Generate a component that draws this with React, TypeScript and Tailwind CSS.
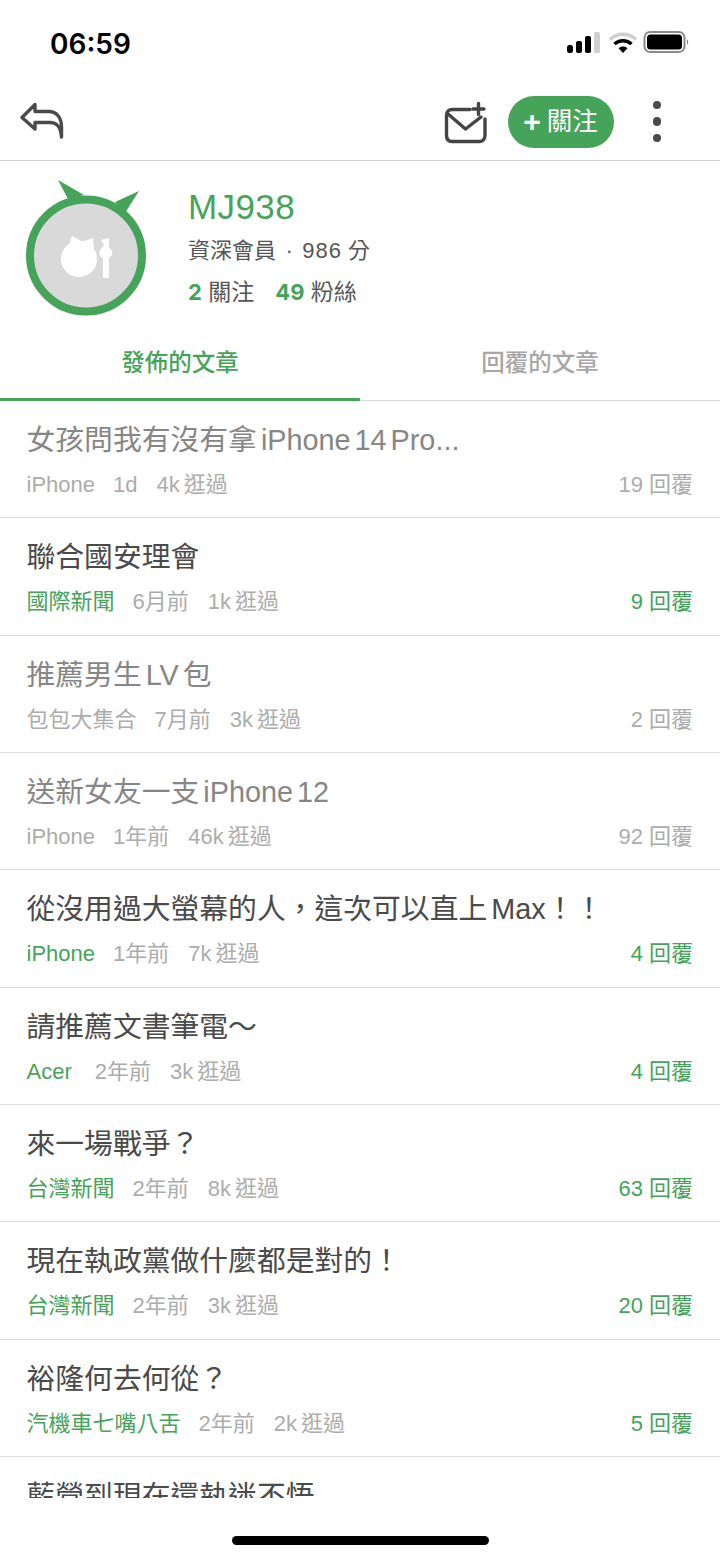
const font = "[font-family:'Liberation_Sans','Noto_Sans_CJK_TC',sans-serif]";

interface Post {
  title: string;
  board: string;
  age: string;
  views: string;
  replies: string;
  read?: boolean;
  gap?: string;
}

const posts: Post[] = [
  { title: "女孩問我有沒有拿 iPhone 14 Pro...", board: "iPhone", age: "1d", views: "4k 逛過", replies: "19 回覆", read: true },
  { title: "聯合國安理會", board: "國際新聞", age: "6月前", views: "1k 逛過", replies: "9 回覆" },
  { title: "推薦男生 LV 包", board: "包包大集合", age: "7月前", views: "3k 逛過", replies: "2 回覆", read: true },
  { title: "送新女友一支 iPhone 12", board: "iPhone", age: "1年前", views: "46k 逛過", replies: "92 回覆", read: true },
  { title: "從沒用過大螢幕的人，這次可以直上 Max！！", board: "iPhone", age: "1年前", views: "7k 逛過", replies: "4 回覆" },
  { title: "請推薦文書筆電～", board: "Acer", age: "2年前", views: "3k 逛過", replies: "4 回覆", gap: "ml-[23px]" },
  { title: "來一場戰爭？", board: "台灣新聞", age: "2年前", views: "8k 逛過", replies: "63 回覆" },
  { title: "現在執政黨做什麼都是對的！", board: "台灣新聞", age: "2年前", views: "3k 逛過", replies: "20 回覆" },
  { title: "裕隆何去何從？", board: "汽機車七嘴八舌", age: "2年前", views: "2k 逛過", replies: "5 回覆" },
  { title: "藍營到現在還執迷不悟", board: "台灣新聞", age: "2年前", views: "2k 逛過", replies: "5 回覆" },
];

function StatusBar() {
  return (
    <div className="flex h-[80px] items-start justify-between pl-[50px] pr-[29px] pt-[26px]">
      <span className="mt-[1px] font-['Inter',sans-serif] text-[28px] font-semibold leading-[34px] text-black">06:59</span>
      <svg width="125" height="24" viewBox="0 0 125 24" className="mt-[5px]">
        <rect x="1" y="14" width="6" height="8" rx="2.5" fill="#000" />
        <rect x="10" y="10" width="6" height="12" rx="2" fill="#000" />
        <rect x="19" y="5" width="6" height="17" rx="2" fill="#000" />
        <rect x="28" y="1" width="6" height="21" rx="1.5" fill="#d0d0d0" />
        <path d="M44 8.5C51 1.5 63 1.5 70 8.5" fill="none" stroke="#cfcfcf" strokeWidth="3.5" />
        <path d="M48.5 13C53 8.6 61 8.6 65.5 13" fill="none" stroke="#000" strokeWidth="3.4" />
        <path d="M52.5 17.2C55 14.8 59 14.8 61.5 17.2L57 22Z" fill="#000" />
        <rect x="78.5" y="1" width="40" height="20" rx="5.5" fill="none" stroke="#8a8a8a" strokeWidth="2" />
        <rect x="81" y="3.5" width="35" height="15" rx="3.5" fill="#000" />
        <path d="M121 8.5C122.5 9 122.5 13 121 13.5Z" fill="#777" />
      </svg>
    </div>
  );
}

function TopBar() {
  return (
    <div className="flex h-[81px] items-center justify-between border-b border-[#cfcfcf] pl-[20px] pr-[59px]">
      <svg width="44" height="38" viewBox="0 0 44 38" className="mt-[2px]" fill="none" stroke="#4a4a4a" strokeWidth="3.4" strokeLinejoin="round" strokeLinecap="round">
        <path d="M15 2.5L2 15.5L15 27V20.5H30C36 20.5 40.5 23.5 41.5 35V25C41.5 15 36 9.5 29 9.5H15Z" />
      </svg>
      <div className="mt-[3px] flex items-center">
        <svg width="44" height="44" viewBox="0 0 44 44" className="mr-[20px] mt-[2px]" fill="none" stroke="#444" strokeWidth="3.4" strokeLinecap="round" strokeLinejoin="round">
          <path d="M26 8.500H8C4.500 8.500 2.500 11 2.500 14V34C2.500 38 4.500 40.500 8 40.500H36C39 40.500 41 38 41 34V18" />
          <path d="M4 13L21.500 28L37 16" />
          <path d="M34.500 2.500V13.500M29 8H40" />
        </svg>
        <button className={`${font} flex h-[52px] w-[106px] items-center justify-center rounded-full bg-[#46a35a] text-[25.5px] text-white`}>
          <span className="mr-[6px] text-[30px] font-bold leading-none">+</span>關注
        </button>
        <div className="ml-[39px] flex flex-col gap-[8px]">
          <span className="h-[8.5px] w-[8.5px] rounded-full bg-[#4a4a4a]" />
          <span className="h-[8.5px] w-[8.5px] rounded-full bg-[#4a4a4a]" />
          <span className="h-[8.5px] w-[8.5px] rounded-full bg-[#4a4a4a]" />
        </div>
      </div>
    </div>
  );
}

function Avatar() {
  return (
    <svg width="122" height="136" viewBox="0 0 122 136">
      <path d="M32 0L42 19L58 15Z" fill="#46a35a" />
      <path d="M113 11L89 22L99 33Z" fill="#46a35a" />
      <circle cx="60" cy="75.5" r="56" fill="#d9d9d9" stroke="#46a35a" strokeWidth="8" />
      <circle cx="53" cy="79" r="18" fill="#fff" />
      <path d="M46 56L43 65L57 62Z" fill="#fff" />
      <path d="M67 58L55 62L68 69Z" fill="#fff" />
      <path d="M75 60L83 58V68A5.500 5.500 0 0 1 83 78V98H77V78A5.500 5.500 0 0 1 75 69L78 65Z" fill="#fff" />
    </svg>
  );
}

function Profile() {
  return (
    <div className={`${font} flex h-[169px] pl-[26px]`}>
      <div className="mt-[19px] h-[136px] w-[122px] shrink-0">
        <Avatar />
      </div>
      <div className="ml-[40px] mt-[25px]">
        <div className="text-[35px] leading-[42px] tracking-[0.4px] text-[#46a35a]">MJ938</div>
        <div className="mt-[6px] flex text-[22px] leading-[34px] text-[#555]">
          資深會員<span className="mx-[9.500px]">·</span><span className="tracking-[1px]">986</span><span className="ml-[6px]">分</span>
        </div>
        <div className="mt-[7px] flex text-[23px] leading-[34px] text-[#555]">
          <span><b className="font-['Inter',sans-serif] text-[22px] font-bold text-[#46a35a]">2</b> 關注</span>
          <span className="ml-[21px]"><b className="font-['Inter',sans-serif] text-[22px] font-bold text-[#46a35a]">49</b> 粉絲</span>
        </div>
      </div>
    </div>
  );
}

function Tabs() {
  return (
    <div className={`${font} flex h-[71px] border-b border-[#d9d9d9] text-[23.5px]`}>
      <div className="mb-[-1px] flex w-[360px] items-start justify-center border-b-[3px] border-[#46a35a] pt-[15px] font-medium leading-[36px] text-[#46a35a]">發佈的文章</div>
      <div className="flex w-[360px] items-start justify-center pt-[15px] font-medium leading-[36px] text-[#a6a6a6]">回覆的文章</div>
    </div>
  );
}

function PostRow({ post }: { post: Post }) {
  const green = !post.read;
  return (
    <div className="h-[117.33px] border-b border-[#dcdcdc] pl-[26.5px] pr-[27px] pt-[18px]">
      <div className={`truncate text-[28.800px] leading-[42px] [word-spacing:-4px] ${post.read ? "text-[#868686]" : "text-[#4a4a4a]"}`}>{post.title}</div>
      <div className="mt-[9px] flex items-center text-[22px] leading-[30px] text-[#acacac] [word-spacing:-2px]">
        <span className={green ? "text-[#46a35a]" : ""}>{post.board}</span>
        <span className={post.gap ?? "ml-[18px]"}>{post.age}</span>
        <span className="ml-[19px]">{post.views}</span>
        <span className={`ml-auto [word-spacing:0px] ${green ? "text-[#46a35a]" : ""}`}>{post.replies}</span>
      </div>
    </div>
  );
}

export default function App() {
  return (
    <div className="relative h-[1558px] w-[720px] overflow-hidden bg-white">
      <StatusBar />
      <TopBar />
      <Profile />
      <Tabs />
      <div className={`${font} h-[1097px] overflow-hidden`}>
        {posts.map((p) => (
          <PostRow key={p.title} post={p} />
        ))}
      </div>
      <div className="absolute bottom-[13px] left-[232px] h-[9px] w-[257px] rounded-full bg-black" />
    </div>
  );
}
